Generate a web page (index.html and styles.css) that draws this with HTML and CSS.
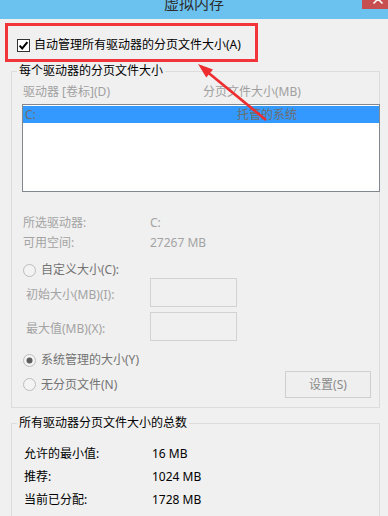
FILE: index.html
```html
<!DOCTYPE html>
<html lang="zh-CN">
<head>
<meta charset="utf-8">
<title>虚拟内存</title>
<link rel="stylesheet" href="styles.css">
</head>
<body>
<div class="window">
  <header class="titlebar">
    <div class="title">虚拟内存</div>
    <div class="close">
      <svg width="26" height="9" viewBox="0 0 26 9"><path d="M11.5 3.5 L16 -1 L20.5 3.5" fill="none" stroke="#fff" stroke-width="1.6"/></svg>
    </div>
  </header>

  <div class="auto-box">
    <label class="check-row">
      <span class="checkbox">
        <svg width="13" height="13" viewBox="0 0 13 13"><rect x="0.5" y="0.5" width="12" height="12" fill="#fff" stroke="#333"/><path d="M2.6 6.6 L5.2 9.4 L10.4 3.2" fill="none" stroke="#000" stroke-width="2"/></svg>
      </span>
      <span>自动管理所有驱动器的分页文件大小(A)</span>
    </label>
  </div>

  <fieldset class="group group-drives">
    <legend>每个驱动器的分页文件大小</legend>
    <div class="group-body">
      <div class="list-head">
        <span class="head-drive">驱动器 [卷标](D)</span>
        <span>分页文件大小(MB)</span>
      </div>
      <div class="listbox">
        <div class="list-row selected">
          <span class="row-drive">C:</span>
          <span>托管的系统</span>
        </div>
      </div>
      <div class="info">
        <span>所选驱动器:</span><span>C:</span>
        <span>可用空间:</span><span>27267 MB</span>
      </div>
      <div class="radio-row custom">
        <span class="radio"><svg width="13" height="13" viewBox="0 0 13 13"><circle cx="6.5" cy="6.5" r="6" fill="#f3f3f3" stroke="#bcbcbc"/></svg></span>
        <span>自定义大小(C):</span>
      </div>
      <div class="size-row">
        <span class="size-label">初始大小(MB)(I):</span>
        <span class="input"></span>
      </div>
      <div class="size-row second">
        <span class="size-label">最大值(MB)(X):</span>
        <span class="input"></span>
      </div>
      <div class="radio-row system">
        <span class="radio"><svg width="13" height="13" viewBox="0 0 13 13"><circle cx="6.5" cy="6.5" r="6" fill="#f3f3f3" stroke="#bcbcbc"/><circle cx="6.5" cy="6.5" r="3" fill="#5e5e5e"/></svg></span>
        <span>系统管理的大小(Y)</span>
      </div>
      <div class="radio-row last">
        <span class="radio"><svg width="13" height="13" viewBox="0 0 13 13"><circle cx="6.5" cy="6.5" r="6" fill="#f3f3f3" stroke="#bcbcbc"/></svg></span>
        <span>无分页文件(N)</span>
        <span class="button">设置(S)</span>
      </div>
    </div>
  </fieldset>

  <fieldset class="group group-total">
    <legend>所有驱动器分页文件大小的总数</legend>
    <div class="group-body totals">
      <span>允许的最小值:</span><span>16 MB</span>
      <span>推荐:</span><span>1024 MB</span>
      <span>当前已分配:</span><span>1728 MB</span>
    </div>
  </fieldset>

  <svg class="arrow" width="388" height="516" viewBox="0 0 388 516">
    <line x1="266" y1="120" x2="205" y2="70" stroke="#ee2d30" stroke-width="2.6"/>
    <polygon points="198,64 213,69.6 206.3,77.6" fill="#ee2d30"/>
  </svg>
</div>
</body>
</html>
```

FILE: styles.css
```css
* {
  box-sizing: border-box;
}

html,
body {
  margin: 0;
  padding: 0;
}

body {
  width: 388px;
  height: 516px;
  overflow: hidden;
  background: #f0f0f0;
  font-family: "Noto Sans", "Noto Sans CJK SC", sans-serif;
  font-size: 12px;
  color: #000;
}

.window {
  position: relative;
  width: 388px;
  height: 516px;
}

.titlebar {
  position: relative;
  height: 19px;
  background: #6bc2ef;
  overflow: hidden;
}

.title {
  margin-top: -5px;
  line-height: 16px;
  font-size: 15px;
  text-align: center;
  color: #2c2c2c;
}

.close {
  position: absolute;
  top: 0;
  right: 0;
  width: 26px;
  height: 9px;
  background: #c84f4f;
}

.close svg {
  display: block;
}

.auto-box {
  margin: 4px 0 0 5px;
  width: 253px;
  height: 39px;
  border: 3px solid #f2353b;
  padding: 11px 0 0 9px;
}

.check-row {
  display: flex;
  align-items: center;
  gap: 4px;
  height: 16px;
  line-height: 16px;
}

.checkbox,
.radio {
  display: block;
  width: 13px;
  height: 13px;
}

.checkbox svg,
.radio svg {
  display: block;
}

.group {
  margin: 1px 0 0 11px;
  width: 369px;
  min-width: 0;
  padding: 0;
  border: 1px solid #dcdcdc;
}

.group legend {
  margin-left: 5px;
  padding: 0 2px;
  line-height: 16px;
  color: #000;
}

.group-drives .group-body {
  padding: 5px 0 9px 11px;
}

.list-head {
  display: flex;
  line-height: 16px;
  color: #a0a0a0;
}

.head-drive {
  width: 180px;
}

.listbox {
  margin: 4px 0 0 -1px;
  width: 358px;
  height: 88px;
  padding-top: 1px;
  border: 1px solid #828790;
  background: #fff;
}

.list-row {
  display: flex;
  height: 17px;
  line-height: 17px;
  padding-left: 2px;
  color: #6d6d6d;
}

.list-row.selected {
  background: #3399ff;
}

.row-drive {
  width: 212px;
}

.info {
  display: grid;
  grid-template-columns: 127px 1fr;
  margin-top: 21px;
  line-height: 20px;
  color: #a3a3a3;
}

.radio-row {
  display: flex;
  align-items: center;
  gap: 5px;
  height: 16px;
  line-height: 16px;
  color: #737373;
}

.radio-row.custom {
  margin-top: 9px;
}

.size-row {
  display: grid;
  grid-template-columns: 124px 87px;
  align-items: start;
  padding-left: 3px;
  height: 29px;
}

.size-row.second {
  margin-top: 5px;
}

.size-label {
  margin-top: 7px;
  line-height: 20px;
  color: #a3a3a3;
}

.input {
  display: block;
  height: 29px;
  border: 1px solid #d2d2d2;
  background: #f0f0f0;
}

.radio-row.system {
  margin-top: 11px;
}

.radio-row.last {
  margin-top: 3px;
  height: 27px;
}

.button {
  margin-left: auto;
  margin-right: 8px;
  width: 86px;
  height: 27px;
  line-height: 25px;
  text-align: center;
  border: 1px solid #cfcfcf;
  background: #efefef;
  color: #8a8a8a;
}

.group-total {
  margin-top: 7px;
  height: 120px;
}

.totals {
  display: grid;
  grid-template-columns: 128px 1fr;
  padding: 11px 0 0 12px;
  line-height: 23px;
  color: #000;
}

.arrow {
  position: absolute;
  top: 0;
  left: 0;
  pointer-events: none;
}
```
